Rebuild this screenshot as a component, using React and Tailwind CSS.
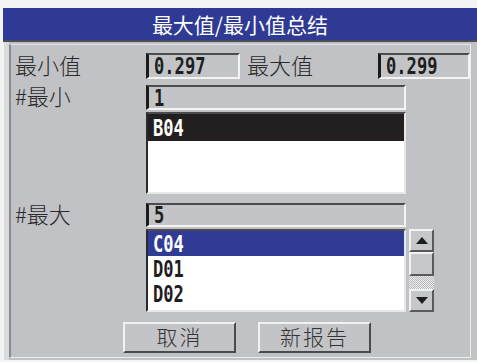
import React from 'react';

const cjk = "font-['Noto_Sans_CJK_SC',sans-serif]";
const mono = "font-['DejaVu_Sans_Mono',monospace] font-bold";
const label = 'text-[22px] leading-none text-[#2a2a2a] font-light pb-[5px]';
const val = `${mono} text-[18px] leading-none inline-block scale-y-[1.3] scale-x-[0.95] origin-left`;

function Field({ value, className }) {
  return (
    <div
      className={`flex items-center bg-[#c3c4c8] border-l-[3px] border-t-2 border-r-2 border-b-2 border-l-[#1c1c1c] border-t-[#4b4b4f] border-r-[#f4f4f4] border-b-[#f4f4f4] pl-[5px] ${className}`}
    >
      <span className={`${val} text-[#1e1e1e]`}>{value}</span>
    </div>
  );
}

function Row({ label }) {
  return (
    <div className="flex items-center h-[25px] pl-[5px] text-[#1e1e1e]">
      <span className={val}>{label}</span>
    </div>
  );
}

function ScrollBtn({ up }) {
  return (
    <div className="h-[23px] flex items-center justify-center bg-[#c6c7cb] border-t-2 border-l-2 border-r-2 border-b-2 border-t-[#f2f2f2] border-l-[#f2f2f2] border-r-[#5a5a5e] border-b-[#5a5a5e]">
      <svg width="12" height="7" viewBox="0 0 12 7">
        {up ? <path d="M6 0 L12 7 L0 7 Z" fill="#1e1e1e" /> : <path d="M0 0 L12 0 L6 7 Z" fill="#1e1e1e" />}
      </svg>
    </div>
  );
}

function Button({ children }) {
  return (
    <div className={`w-[113px] h-[31px] flex items-center justify-center bg-[#c3c4c8] border-t-2 border-l-2 border-r-2 border-b-2 border-t-[#f2f2f2] border-l-[#f2f2f2] border-r-[#4a4a4e] border-b-[#4a4a4e] ${cjk} text-[21px] leading-none text-[#333] font-light tracking-[2px] pb-[3px]`}>
      {children}
    </div>
  );
}

export default function App() {
  return (
    <div className={`w-[477px] h-[362px] bg-[#f3f3f3] flex flex-col pt-[8px] ${cjk}`}>
      <div className="ml-[3px] h-[34px] bg-[#2e3a94] border-b-2 border-[#4c4c54] flex items-center justify-center text-white text-[21px] leading-none pt-[1px]">
        最大值/最小值总结
      </div>
      <div className="ml-[4px] h-[318px] bg-[#c1c2c6] border-l-[5px] border-[#dadbdd] flex">
        <div className="mt-[2px] mb-[2px] w-[462px] border-l-2 border-t border-r border-b border-l-[#8b8c90] border-t-[#e4e4e6] border-r-[#ececee] border-b-[#ececee] pl-[4px] pt-[8px] flex flex-col">
          <div className="flex items-center h-[26px]">
            <div className={`w-[131px] ${label}`}>最小值</div>
            <Field value="0.297" className="w-[94px] h-[26px]" />
            <div className={`w-[138px] pl-[7px] ${label}`}>最大值</div>
            <Field value="0.299" className="w-[92px] h-[26px]" />
          </div>
          <div className="flex items-center h-[25px] mt-[6px]">
            <div className={`w-[131px] ${label}`}>#最小</div>
            <Field value="1" className="w-[260px] h-[25px]" />
          </div>
          <div className="ml-[131px] mt-[2px] w-[260px] h-[82px] bg-white border-l-2 border-t-2 border-r-2 border-b-2 border-l-[#2a2a2a] border-t-[#4b4b4f] border-r-[#e8e8e8] border-b-[#e8e8e8]">
            <div className="h-[27px] flex items-center pl-[5px] bg-[#231f20] text-white">
              <span className={val}>B04</span>
            </div>
          </div>
          <div className="flex items-center h-[24px] mt-[9px]">
            <div className={`w-[131px] ${label}`}>#最大</div>
            <Field value="5" className="w-[260px] h-[24px]" />
          </div>
          <div className="flex mt-[2px]">
            <div className="ml-[131px] w-[260px] h-[83px] bg-white border-l-2 border-t-2 border-r-2 border-b-2 border-l-[#2a2a2a] border-t-[#4b4b4f] border-r-[#e8e8e8] border-b-[#e8e8e8]">
              <div className="h-[25px] flex items-center pl-[5px] bg-[#2f3b95] text-white">
                <span className={val}>C04</span>
              </div>
              <Row label="D01" />
              <Row label="D02" />
            </div>
            <div className="ml-[3px] w-[25px] h-[83px] flex flex-col">
              <ScrollBtn up />
              <div className="h-[24px] bg-[#c6c7cb] border-t-2 border-l-2 border-r-2 border-b-2 border-t-[#f2f2f2] border-l-[#f2f2f2] border-r-[#5a5a5e] border-b-[#5a5a5e]" />
              <div className="h-[13px] bg-[repeating-conic-gradient(#b9babd_0%_25%,#ececec_0%_50%)] bg-[length:2px_2px]" />
              <ScrollBtn />
            </div>
          </div>
          <div className="flex mt-[10px] pl-[108px] gap-[22px]">
            <Button>取消</Button>
            <Button>新报告</Button>
          </div>
        </div>
      </div>
    </div>
  );
}
